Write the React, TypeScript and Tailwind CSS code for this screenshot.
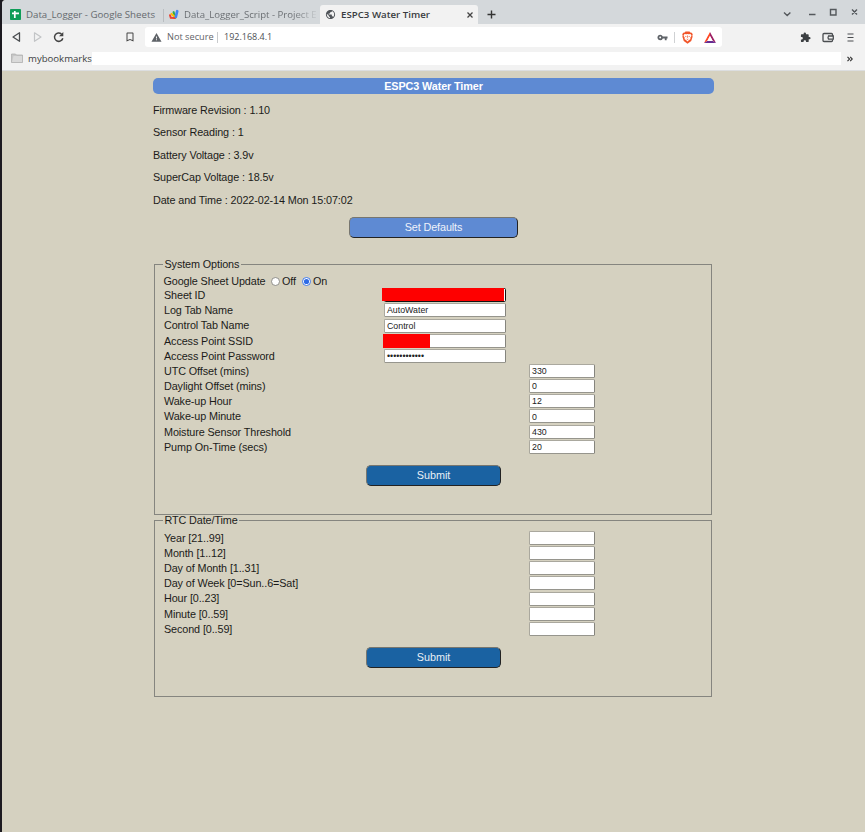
import { ReactNode } from "react";
import { MdExtension, MdVpnKey, MdWarning, MdPublic, MdBookmarkBorder } from "react-icons/md";

const chromeFont = "font-['Open_Sans','Noto_Sans',sans-serif]";

function SheetsIcon() {
  return (
    <svg className="h-[11px] w-[11px] shrink-0" viewBox="0 0 11 11">
      <rect width="11" height="11" rx="0.8" fill="#0f9d58" />
      <path d="M4.800 2v7M2 4.400h7" stroke="#fff" strokeWidth="1.700" />
    </svg>
  );
}

function ScriptIcon() {
  return (
    <svg className="h-[11px] w-[11px] shrink-0" viewBox="0 0 11 11" strokeLinecap="round">
      <path d="M5.600 3.200L7 8" stroke="#34a853" strokeWidth="2.200" />
      <path d="M3.500 5L7.500 8.500" stroke="#fbbc04" strokeWidth="2.200" />
      <path d="M2 6.200L2.800 8.700L7 8.900" stroke="#ea4335" strokeWidth="2" fill="none" />
      <path d="M9.200 2.200L7.800 8" stroke="#4285f4" strokeWidth="2.700" />
    </svg>
  );
}

function BraveIcon() {
  return (
    <svg className="h-[13px] w-[11px]" viewBox="0 0 22 26">
      <path d="M7 1h8l2.5 2.6 2.3-.3L21.5 7l-.8 2.2.5 2.5-2.7 8.5L11 25.5 3.5 20.2.8 11.700l.5-2.500L.5 7l1.700-3.700 2.300.3z" fill="#f1562b" />
      <path d="M5 6l3.500.6L11 6l2.500.6L17 6l2 3.500-2.500 4 .5 2.500-3.500 2.500L11 21l-2.500-2.500L5 16l.5-2.500L3 9.500z" fill="#fff" />
      <path d="M5.500 9.500l3.500 1-.8 2zM16.500 9.500l-3.500 1 .8 2zM10.200 9h1.600l-.3 5.500h-1zM8 15l3 1.500 3-1.500-3 3z" fill="#f1562b" />
    </svg>
  );
}

function BatIcon() {
  return (
    <svg className="h-[11px] w-[12px]" viewBox="0 0 24 22">
      <path d="M12 0L0 22l6.500-4L12 8z" fill="#ff4724" />
      <path d="M12 0l12 22-6.500-4L12 8z" fill="#9e1f63" />
      <path d="M0 22h24l-6.500-4h-11z" fill="#662d91" />
      <path d="M12 8l5.500 10h-11z" fill="#fff" />
    </svg>
  );
}

function TabStrip() {
  return (
    <div className="flex h-6 bg-[#d4d8db] text-[#666a6e]">
      <div className="flex w-[161px] items-center pl-2 pt-[5px]">
        <SheetsIcon />
        <span className="ml-[5px] whitespace-nowrap text-[9.7px] leading-4">Data_Logger - Google Sheets</span>
      </div>
      <div className="mt-[9px] h-[13px] w-px bg-[#b9bdc0]" />
      <div className="flex w-[156px] items-center pl-1 pt-[5px]">
        <ScriptIcon />
        <span className="ml-[5px] w-[136px] whitespace-nowrap bg-linear-to-r from-[#666a6e] from-80% to-transparent bg-clip-text text-[9.6px] leading-4 text-transparent">
          Data_Logger_Script - Project E
        </span>
      </div>
      <div className="mt-[5px] flex h-[19px] w-[158px] items-center rounded-t-[3px] bg-[#f2f2f2] pl-[5px] text-[#383b3f]">
        <MdPublic className="h-[11px] w-[11px] text-[#505459]" />
        <span className="ml-[5px] w-[126px] whitespace-nowrap text-[9.7px] font-semibold leading-4">ESPC3 Water Timer</span>
        <svg className="h-[6px] w-[6px]" viewBox="0 0 6 6" stroke="#444" strokeWidth="1.3">
          <path d="M.5.5l5 5M5.500.5l-5 5" />
        </svg>
      </div>
      <svg className="ml-[9px] mt-[10px] h-[9px] w-[9px]" viewBox="0 0 9 9" stroke="#333" strokeWidth="1.400">
        <path d="M4.500.5v8M.5 4.500h8" />
      </svg>
      <svg className="ml-auto h-6 w-[85px]" viewBox="0 0 85 24" fill="none" stroke="#54585c" strokeWidth="1.400">
        <path d="M4 12.500l3.200 3L10.400 12.500M29 14.500h6.500M50.500 9.500h5.500v5.500h-5.500zM72 9.500l5 5M77 9.500l-5 5" />
      </svg>
    </div>
  );
}

function Toolbar() {
  return (
    <div className="flex h-[26px] items-center bg-[#f2f2f2]">
      <svg className="h-[26px] w-[120px]" viewBox="2 0 120 26" fill="none" strokeLinejoin="round">
        <path d="M19.500 8.800v8.500L13 13z" stroke="#4a4d50" strokeWidth="1.300" />
        <path d="M34.500 8.800v8.500L41 13z" stroke="#c2c4c6" strokeWidth="1.200" />
        <path d="M61.500 10A4.200 4.200 0 1 0 62.800 14.200" stroke="#444" strokeWidth="1.500" />
        <path d="M63.300 8v4.300h-4.300z" fill="#444" />
      </svg>
      <MdBookmarkBorder className="ml-[2px] h-[12px] w-[12px] text-[#444]" />
      <div className="ml-[9px] flex h-5 w-[577px] items-center rounded-[3px] bg-white pl-[6px] text-[9.2px] text-[#5f6368]">
        <MdWarning className="h-[11px] w-[11px]" />
        <span className="ml-[5px] w-[50px] whitespace-nowrap">Not secure</span>
        <div className="h-[11px] w-px bg-[#c9cbcd]" />
        <span className="ml-[6px] text-[9px] text-[#4c5054]">192.168.4.1</span>
        <MdVpnKey className="ml-auto h-[11px] w-[11px]" />
        <div className="ml-[6px] h-[11px] w-px bg-[#cfd1d3]" />
        <div className="ml-[7px] flex items-center gap-[11px] pr-[6px]">
          <BraveIcon />
          <BatIcon />
        </div>
      </div>
      <MdExtension className="ml-[78px] h-[11px] w-[11px] text-[#3c3f42]" />
      <svg className="ml-[11px] h-[11px] w-[12px]" viewBox="0 0 12 11" fill="none" stroke="#4a4d50" strokeWidth="1.300">
        <path d="M10.500 4V2.500Q10.500 1.500 9.500 1.500H2Q1 1.500 1 2.500V8.500Q1 9.500 2 9.500H9.500Q10.500 9.500 10.500 8.500V7.500" />
        <path d="M6.500 4h4.800v3.200H6.500Q5.500 5.600 6.500 4z" />
      </svg>
      <svg className="ml-[13px] h-[9px] w-[7px]" viewBox="0 0 7 9" stroke="#4a4d50" strokeWidth="1.200">
        <path d="M.5 1h6M.5 4.500h6M.5 8h6" />
      </svg>
    </div>
  );
}

function BookmarksBar() {
  return (
    <div className="flex h-[21px] border-b border-[#dcdee0] bg-[#f2f2f2]">
      <svg className="ml-[9px] mt-[3px] h-[11px] w-[12px]" viewBox="0 0 12 11">
        <path d="M.5 1h4l1 1h6v7.500H.5z" fill="#c6c6c6" stroke="#ababab" strokeWidth=".7" />
        <path d="M2.500 3h8.500v6H1z" fill="#dadada" />
      </svg>
      <span className="ml-[5px] mt-px w-[64px] whitespace-nowrap text-[9.6px] leading-4 text-[#3c3f42]">mybookmarks</span>
      <div className="mt-[2px] h-[13px] w-[749px] bg-white" />
      <svg className="ml-[6px] mt-[6px] h-[6px] w-[6px]" viewBox="0 0 6 6" fill="none" stroke="#333" strokeWidth="1.100">
        <path d="M.5.8L2.600 3 .5 5.200M3.200.8L5.300 3 3.200 5.200" />
      </svg>
    </div>
  );
}

type Entry = { label: string; value?: string; wide?: boolean; redact?: "full" | "part" };

const systemRows: Entry[] = [
  { label: "Sheet ID", wide: true, redact: "full" },
  { label: "Log Tab Name", wide: true, value: "AutoWater" },
  { label: "Control Tab Name", wide: true, value: "Control" },
  { label: "Access Point SSID", wide: true, redact: "part" },
  { label: "Access Point Password", wide: true, value: "••••••••••••" },
  { label: "UTC Offset (mins)", value: "330" },
  { label: "Daylight Offset (mins)", value: "0" },
  { label: "Wake-up Hour", value: "12" },
  { label: "Wake-up Minute", value: "0" },
  { label: "Moisture Sensor Threshold", value: "430" },
  { label: "Pump On-Time (secs)", value: "20" },
];

const clockRows: Entry[] = [
  { label: "Year [21..99]" },
  { label: "Month [1..12]" },
  { label: "Day of Month [1..31]" },
  { label: "Day of Week [0=Sun..6=Sat]" },
  { label: "Hour [0..23]" },
  { label: "Minute [0..59]" },
  { label: "Second [0..59]" },
];

function FieldRow({ label, value, wide, redact }: Entry) {
  return (
    <div className="flex h-[15.17px] items-center">
      <span className={wide ? "w-[220px]" : "w-[365px]"}>{label}</span>
      <div
        className={
          "relative flex h-[14px] items-center rounded-[1.500px] border bg-white pl-[2px] pt-px text-[8.8px] leading-none tracking-normal text-[#222] " +
          (wide ? "w-[122px] " : "w-[66px] ") +
          (redact === "full" ? "border-[#111]" : "border-[#aaa89e] border-r-[#85847d] border-b-[#96958d]")
        }
      >
        {value}
        {redact === "full" && <div className="absolute -left-[3px] -top-px h-[13px] w-[122px] bg-[#fe0000]" />}
        {redact === "part" && <div className="absolute -left-[2px] -top-px h-[14px] w-[47px] bg-[#fe0000]" />}
      </div>
    </div>
  );
}

function Submit() {
  return (
    <button className="ml-[202px] block h-[21px] w-[135px] rounded-[5px] border-[1.500px] border-t-[#77766f] border-r-[#222] border-b-[#222] border-l-[#77766f] bg-[#1a62a2] leading-none tracking-normal text-[#e8eef5]">
      Submit
    </button>
  );
}

function Panel({ title, className, children }: { title: string; className: string; children: ReactNode }) {
  return (
    <fieldset className={"ml-px w-[558px] border border-[#85857f] pl-[9px] " + className}>
      <legend className="-ml-px h-[12px] px-[1.500px] leading-[11px]">{title}</legend>
      {children}
    </fieldset>
  );
}

function Radio({ checked }: { checked?: boolean }) {
  return (
    <svg className="h-[9px] w-[9px]" viewBox="0 0 9 9">
      <circle cx="4.500" cy="4.500" r="4" fill="#fff" stroke={checked ? "#2e6be6" : "#85857f"} strokeWidth=".9" />
      {checked && <circle cx="4.500" cy="4.500" r="2.600" fill="#2e6be6" />}
    </svg>
  );
}

const readings = [
  "Firmware Revision : 1.10",
  "Sensor Reading : 1",
  "Battery Voltage : 3.9v",
  "SuperCap Voltage : 18.5v",
  "Date and Time : 2022-02-14 Mon 15:07:02",
];

export default function App() {
  return (
    <div className="flex h-[832px] w-[865px] overflow-hidden bg-[#1c1a20]">
      <div className="ml-[2px] flex grow flex-col overflow-hidden rounded-tl-[4px] bg-[#d5d1c0]">
        <div className={chromeFont}>
          <TabStrip />
          <Toolbar />
          <BookmarksBar />
        </div>
        <main className="ml-[151px] w-[561px] pt-[7px] font-['Liberation_Sans',Arial,sans-serif] text-[10.8px] tracking-[-0.1px] text-[#1b1b19]">
          <h1 className="h-4 rounded-[5px] bg-[#5e8ad3] text-center font-bold leading-4 text-white">ESPC3 Water Timer</h1>
          <div className="pt-[5px]">
            {readings.map((r) => (
              <p key={r} className="h-[22.4px] leading-[22.4px]">{r}</p>
            ))}
          </div>
          <button className="ml-[196px] mt-[6px] block h-[21px] w-[169px] rounded-[5px] border-[1.500px] border-t-[#77766f] border-r-[#222] border-b-[#222] border-l-[#77766f] bg-[#5e8ad3] leading-none text-[#eef2fa]">
            Set Defaults
          </button>
          <Panel title="System Options" className="mt-[21px] h-[256px]">
            <div className="mt-[4px] flex h-[13px] items-center">
              <span className="-ml-[0.500px] w-[107.500px]">Google Sheet Update</span>
              <Radio />
              <span className="ml-[2px] w-[20px]">Off</span>
              <Radio checked />
              <span className="ml-[2px]">On</span>
            </div>
            <div className="-mt-[0.300px] mb-[10.300px]">
              {systemRows.map((e) => <FieldRow key={e.label} {...e} />)}
            </div>
            <Submit />
          </Panel>
          <Panel title="RTC Date/Time" className="h-[182px]">
            <div className="mb-[10.600px] mt-[3.400px]">
              {clockRows.map((e) => <FieldRow key={e.label} {...e} />)}
            </div>
            <Submit />
          </Panel>
        </main>
      </div>
    </div>
  );
}
